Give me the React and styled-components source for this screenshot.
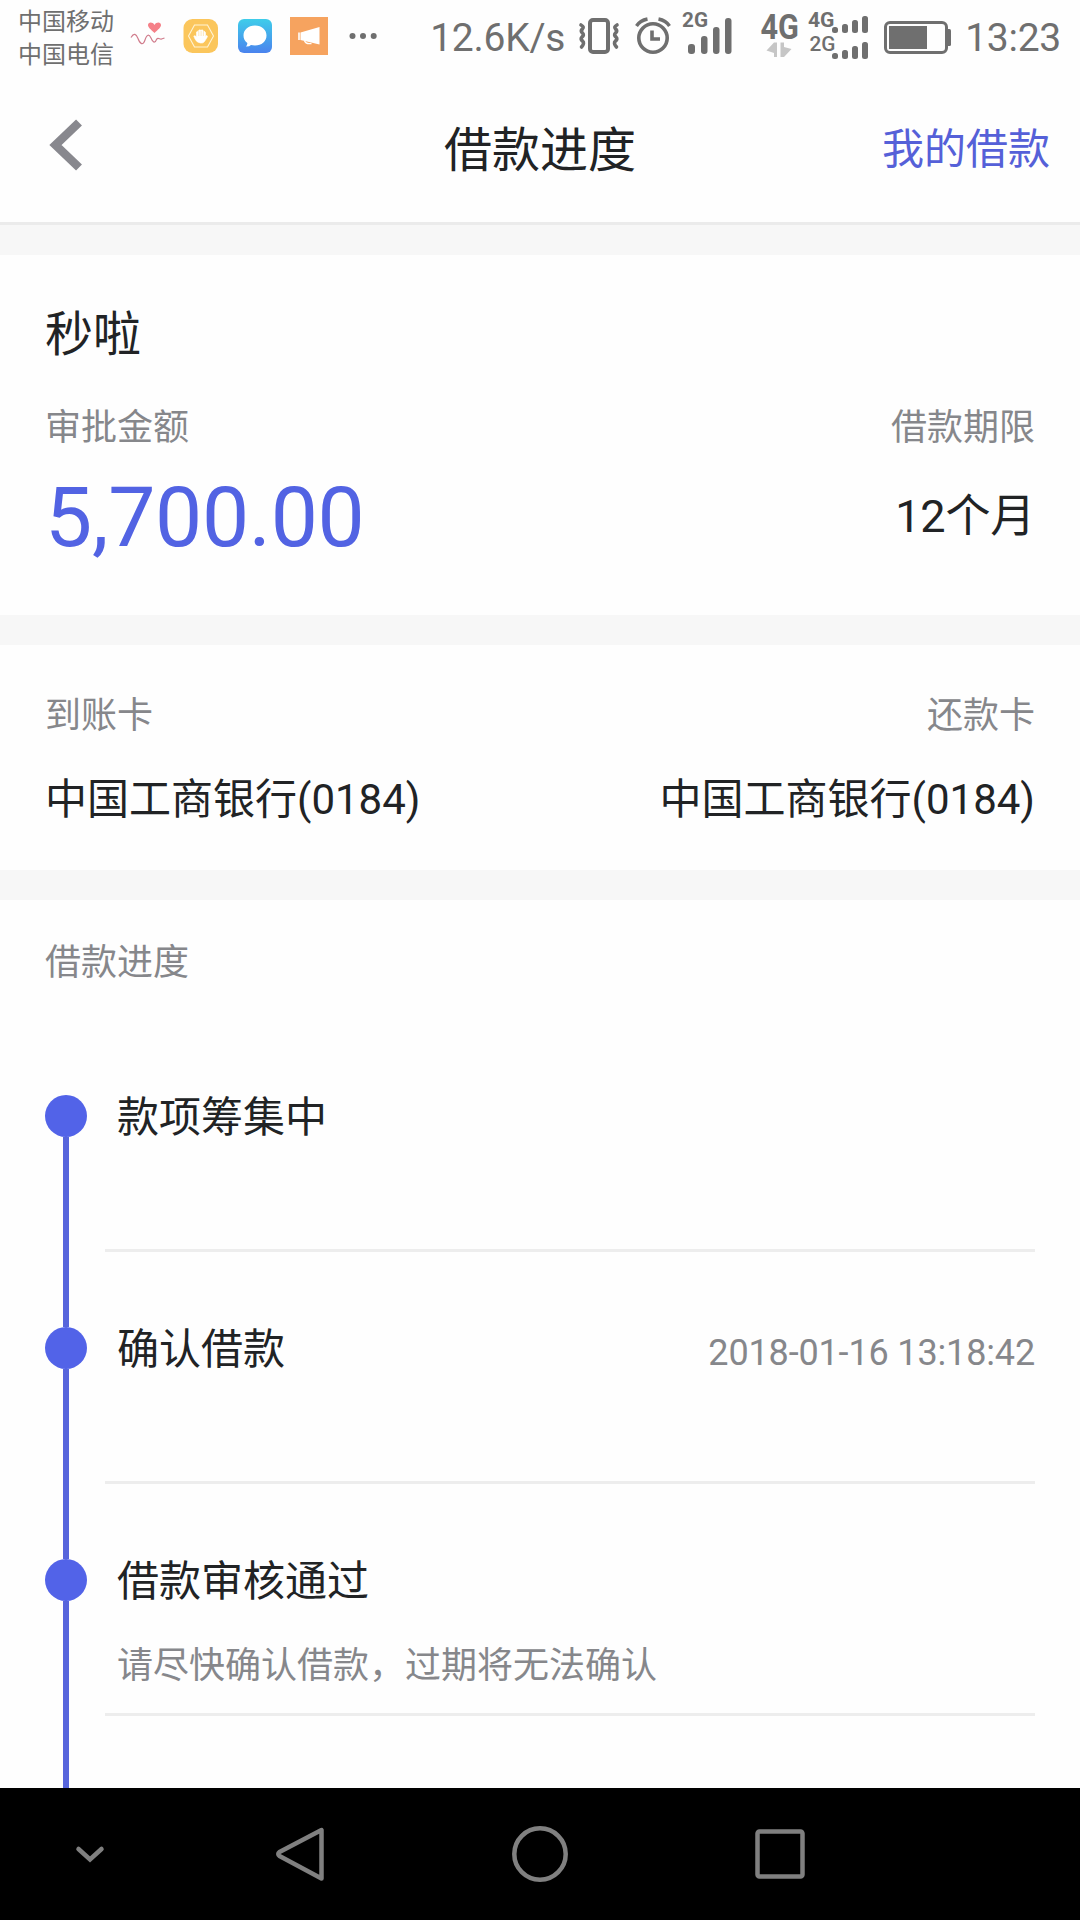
import React from 'react';
import styled, { createGlobalStyle } from 'styled-components';

const GlobalStyle = createGlobalStyle`
  * {
    box-sizing: border-box;
  }

  body {
    margin: 0;
    background-color: #fefefe;
    color: #212325;
    font-family: Roboto, 'Noto Sans CJK SC', sans-serif;
  }

  svg {
    display: block;
    flex: none;
  }
`;

const Screen = styled.div`
  width: 1080px;
  height: 1920px;
  display: flex;
  flex-direction: column;
  overflow: hidden;
`;

const StatusBar = styled.div`
  height: 72px;
  flex: none;
  display: flex;
  justify-content: space-between;
  padding: 0 19px 0 18px;
  color: #6f6f6f;
`;

const StatusGroup = styled.div`
  display: flex;
  align-items: flex-start;
`;

const Carriers = styled.div`
  width: 112px;
  padding-top: 6px;
  font-size: 24px;
  line-height: 33px;
`;

const StatusText = styled.span`
  height: 72px;
  font-size: 39px;
  letter-spacing: -0.25px;
  line-height: 76px;
  white-space: nowrap;
`;

const SpeedText = styled(StatusText)`
  margin-right: -1px;
`;

const ClockText = styled(StatusText)`
  margin-left: -3px;
`;

const Header = styled.header`
  height: 153px;
  flex: none;
  display: grid;
  grid-template-columns: 1fr auto 1fr;
  align-items: center;
  padding: 0 30px;
  border-bottom: 3px solid #ebebeb;
`;

const BackButton = styled.a`
  padding: 0 0 5px 18px;
`;

const PageTitle = styled.h1`
  margin: 0;
  padding-top: 7px;
  font-size: 48px;
  font-weight: 400;
  line-height: 60px;
`;

const HeaderLink = styled.a`
  justify-self: end;
  padding-top: 6px;
  color: #5560d8;
  font-size: 42px;
  line-height: 60px;
`;

const Main = styled.main`
  flex: 1;
  min-height: 0;
  overflow: hidden;
  background-color: #f7f7f7;
  display: flex;
  flex-direction: column;
  gap: 30px;
  padding-top: 30px;
`;

const Section = styled.section`
  flex: none;
  height: ${({ $height }) => $height}px;
  padding: ${({ $top }) => $top}px 45px 0;
  background-color: #fefefe;
`;

const Row = styled.div`
  display: flex;
  justify-content: space-between;
  align-items: center;
  height: ${({ $height }) => $height}px;
`;

const Lender = styled.h2`
  margin: 0;
  font-size: 48px;
  font-weight: 400;
  line-height: 60px;
`;

const Label = styled.span`
  color: #86878b;
  font-size: 36px;
  line-height: 48px;
`;

const Amount = styled.span`
  color: #5263e3;
  font-size: 84px;
  letter-spacing: -0.3px;
  line-height: 100px;
`;

const Value = styled.span`
  font-size: 42px;
  line-height: 60px;
`;

const Term = styled(Value)`
  padding-bottom: 3px;
  font-size: 45px;
  letter-spacing: -0.2px;
`;

const Timeline = styled.ul`
  margin: 108px 0 0;
  padding: 0;
  list-style: none;
`;

const Step = styled.li`
  height: 232px;
  display: flex;
`;

const Rail = styled.div`
  width: 42px;
  margin-right: 18px;
  display: flex;
  flex-direction: column;
  align-items: center;
`;

const Dot = styled.span`
  width: 42px;
  height: 42px;
  border-radius: 50%;
  background-color: #5263e8;
`;

const Line = styled.span`
  flex: 1;
  width: 6px;
  background-color: #5765dc;
`;

const StepBody = styled.div`
  flex: 1;
  height: 157px;
  padding-left: 12px;
  border-bottom: 3px solid #ededed;
`;

const StepHead = styled.div`
  height: 46px;
  display: flex;
  justify-content: space-between;
  align-items: center;
`;

const StepTime = styled(Label)`
  padding-top: 5px;
  letter-spacing: -0.15px;
`;

const StepNote = styled.p`
  margin: 31px 0 0;
  color: #86878b;
  font-size: 36px;
  line-height: 60px;
`;

const NavBar = styled.nav`
  height: 132px;
  flex: none;
  background-color: #000;
`;

const steps = [
  { title: '款项筹集中' },
  { title: '确认借款', time: '2018-01-16 13:18:42' },
  { title: '借款审核通过', note: '请尽快确认借款，过期将无法确认' },
  { title: '' },
];

const AppIcons = () => (
  <svg width="250" height="72" viewBox="130 0 250 72">
    <defs>
      <linearGradient id="chat" x1="0" y1="0" x2="0" y2="1">
        <stop offset="0" stopColor="#3fcdea" />
        <stop offset="1" stopColor="#4a83ee" />
      </linearGradient>
    </defs>
    <path
      d="M154.500 33 C151 29.500 148 27.500 148 25 C148 22 152.500 21.500 154.500 25 C156.500 21.500 161 22 161 25 C161 27.500 158 29.500 154.500 33Z"
      fill="#f58088"
    />
    <path
      d="M131 37.500 C134 32.500 136 34 138 38.500 C140 44 143 46 145 40 C147 34 149 34 151 38 C153 43 155 43.500 156.500 39.500 C158 36.500 160 40 161.500 39 L164.500 38"
      fill="none"
      stroke="#d07c8c"
      strokeWidth="1.2"
    />

    <rect x="183.500" y="19" width="34.500" height="34" rx="9" fill="#fbc65c" />
    <path d="M188.500 36 L194.500 25 H207.500 L213.500 36 L207.500 47 H194.500Z" fill="none" stroke="#fff3d4" strokeWidth="1.1" />
    <path
      d="M196.500 37 V32 Q197.500 30.500 198.600 32 V30.500 Q200 29 201 30.500 Q202 29 203.200 30.500 V32 Q204.600 30.500 205.500 32.500 V36.500 L206.500 35.500 Q208 35.500 207 37.500 L204.500 41.500 Q203 43.500 200.500 43 Q196.500 42.500 195 39 L193.800 36 Q195 35 196.500 37Z"
      fill="#fff"
      stroke="#fff"
      strokeWidth=".6"
    />
    <path d="M198.800 31.500 V36 M201.100 31 V36 M203.400 31.500 V36" stroke="#fbc65c" strokeWidth=".4" />

    <rect x="238" y="19" width="34" height="34" rx="6" fill="url(#chat)" />
    <path
      d="M255 25.500 C262 25.500 266.500 30 266.500 35.500 C266.500 41.500 261.500 45.500 255 45.500 C253.500 45.500 252 45.300 251 45 Q249 46.800 246 46.500 Q247.500 45 247.300 43 C244.800 41.200 243.500 38.500 243.500 35.500 C243.500 30 248 25.500 255 25.500Z"
      fill="#fff"
    />

    <rect x="290" y="17" width="38" height="38" fill="#f6a35f" />
    <path d="M300.500 32.500 L319.500 27 V44.500 L300.500 40Z" fill="#fff" />
    <path d="M299 32.500 V40" stroke="#fff" strokeWidth="1.600" />
    <path d="M304.500 40.500 Q305.500 44.300 311.500 43.500" fill="none" stroke="#fff" strokeWidth="1.400" />

    <g fill="#6f6f6f">
      <circle cx="352.500" cy="36" r="3" />
      <circle cx="363" cy="36" r="3" />
      <circle cx="373.700" cy="36" r="3" />
    </g>
  </svg>
);

const SystemIcons = () => (
  <svg width="404" height="72" viewBox="564 0 404 72" fill="#6f6f6f">
    {/* vibrate */}
    <rect x="590" y="20" width="18" height="32" rx="3" fill="none" stroke="#6f6f6f" strokeWidth="4" />
    <path
      d="M581 25 Q584.500 27 582.500 29 Q580 31 582.500 33 Q584.500 35 582 37 Q580 39 582.500 41 Q585 43 581.500 47 M617 25 Q613.500 27 615.500 29 Q618 31 615.500 33 Q613.500 35 616 37 Q618 39 615.500 41 Q613 43 616.500 47"
      fill="none"
      stroke="#6f6f6f"
      strokeWidth="3.600"
      strokeLinecap="round"
    />

    {/* alarm */}
    <g fill="none" stroke="#6f6f6f">
      <circle cx="653" cy="38" r="14.200" strokeWidth="3.600" />
      <path d="M636.500 26 Q640 20.500 647.500 19 M669.500 26 Q666 20.500 658.500 19" strokeWidth="3.400" />
      <path d="M652 30.500 V39 H660" strokeWidth="3.600" />
    </g>

    {/* first sim */}
    <text x="682" y="27" fontFamily="Roboto" fontWeight="700" fontSize="20.500" textLength="26" lengthAdjust="spacingAndGlyphs">2G</text>
    <rect x="688" y="44" width="7" height="10" rx="3" />
    <rect x="701" y="36" width="6.500" height="18" rx="3" />
    <rect x="713" y="27" width="6.500" height="27" rx="3" />
    <rect x="725" y="18" width="6.500" height="36" rx="3" />

    <text x="760.500" y="39" fontFamily="Roboto" fontWeight="700" fontSize="35.500" textLength="38.500" lengthAdjust="spacingAndGlyphs">4G</text>
    <path d="M777 42.500 V57 H774 V53 L766.500 50.500 L774 42.500Z M780.500 42.500 H784 V47 L791.500 49 L784 57 H780.500Z" fill="#c6c6c6" />

    {/* second sim */}
    <text x="808" y="27" fontFamily="Roboto" fontWeight="700" fontSize="20.500" textLength="26.500" lengthAdjust="spacingAndGlyphs">4G</text>
    <text x="809.500" y="51" fontFamily="Roboto" fontWeight="500" fontSize="20.500" textLength="26" lengthAdjust="spacingAndGlyphs">2G</text>
    {[33, 59].map((bottom) => (
      <g key={bottom}>
        <rect x="832" y={bottom - 6} width="6" height="6" rx="2.500" />
        <rect x="842" y={bottom - 9} width="6" height="9" rx="2.500" />
        <rect x="852" y={bottom - 13} width="6" height="13" rx="2.500" />
        <rect x="862" y={bottom - 17} width="6" height="17" rx="2.500" />
      </g>
    ))}

    {/* battery */}
    <rect x="885.500" y="22.500" width="61" height="30" rx="4.500" fill="none" stroke="#6f6f6f" strokeWidth="3" />
    <rect x="889" y="26" width="38" height="23" />
    <rect x="946" y="29" width="5" height="17" rx="1.500" />
  </svg>
);

const NavIcons = () => (
  <svg width="1080" height="132" viewBox="0 1788 1080 132" fill="none" stroke="#808080" strokeWidth="4.500">
    <path d="M78.500 1849 L90 1859.500 L101.500 1849" strokeLinecap="round" />
    <path d="M321.500 1830 V1878.500 L279.500 1856 Q277 1854 279.500 1852Z" strokeLinejoin="round" />
    <circle cx="540" cy="1854" r="25.700" />
    <rect x="757.500" y="1831.500" width="45" height="45" rx="2" />
  </svg>
);

const App = () => {
  return (
    <Screen>
      <GlobalStyle />
      <StatusBar>
        <StatusGroup>
          <Carriers>
            <div>中国移动</div>
            <div>中国电信</div>
          </Carriers>
          <AppIcons />
        </StatusGroup>
        <StatusGroup>
          <SpeedText>12.6K/s</SpeedText>
          <SystemIcons />
          <ClockText>13:23</ClockText>
        </StatusGroup>
      </StatusBar>

      <Header>
        <BackButton>
          <svg width="36" height="52" viewBox="0 0 36 52">
            <path d="M31 3.500 L7.500 26 L31 48.500" fill="none" stroke="#88888e" strokeWidth="8.500" />
          </svg>
        </BackButton>
        <PageTitle>借款进度</PageTitle>
        <HeaderLink>我的借款</HeaderLink>
      </Header>

      <Main>
        <Section $height={360} $top={50}>
          <Row $height={60}>
            <Lender>秒啦</Lender>
          </Row>
          <Row $height={126}>
            <Label>审批金额</Label>
            <Label>借款期限</Label>
          </Row>
          <Row $height={54}>
            <Amount>5,700.00</Amount>
            <Term>12个月</Term>
          </Row>
        </Section>

        <Section $height={225} $top={47}>
          <Row $height={48}>
            <Label>到账卡</Label>
            <Label>还款卡</Label>
          </Row>
          <Row $height={120}>
            <Value>中国工商银行(0184)</Value>
            <Value>中国工商银行(0184)</Value>
          </Row>
        </Section>

        <Section $height={1200} $top={39}>
          <Row $height={48}>
            <Label>借款进度</Label>
          </Row>
          <Timeline>
            {steps.map(({ title, time, note }) => (
              <Step key={title}>
                <Rail>
                  <Dot />
                  <Line />
                </Rail>
                <StepBody>
                  <StepHead>
                    <Value>{title}</Value>
                    {time && <StepTime>{time}</StepTime>}
                  </StepHead>
                  {note && <StepNote>{note}</StepNote>}
                </StepBody>
              </Step>
            ))}
          </Timeline>
        </Section>
      </Main>

      <NavBar>
        <NavIcons />
      </NavBar>
    </Screen>
  );
};

export default App;
